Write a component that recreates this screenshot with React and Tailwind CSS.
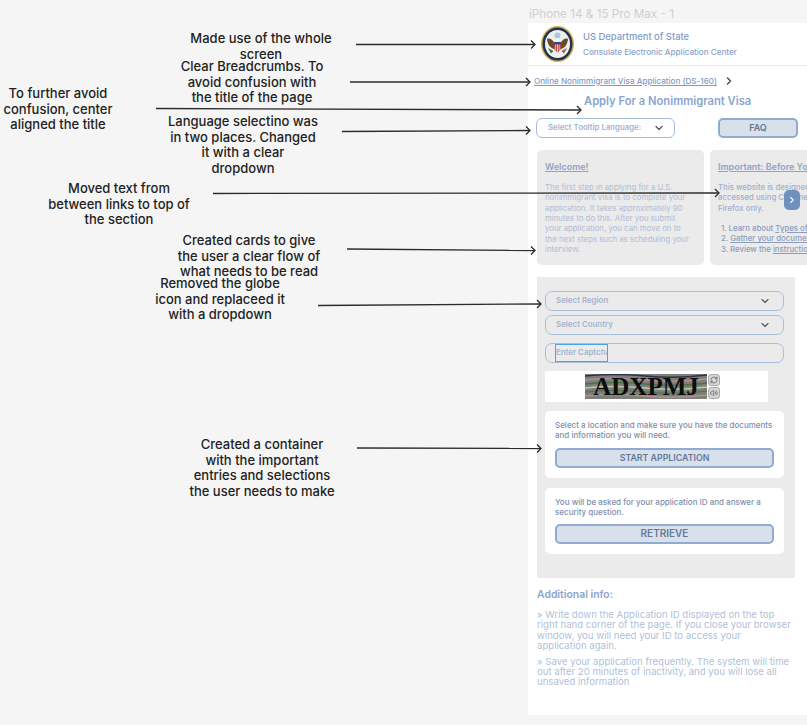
import React from 'react';
import { ChevronDown, ChevronRight, RefreshCw, Volume2 } from 'lucide-react';

const Note = ({ className, lines }) => (
  <div className={`absolute -translate-x-1/2 text-center whitespace-nowrap text-[13px] leading-[15.6px] font-medium text-[#222] ${className}`}>
    {lines.map((line) => (
      <div key={line}>{line}</div>
    ))}
  </div>
);

const arrows = [
  [356, 44.5, 535, 44.5],
  [350, 82, 530, 82],
  [156, 108.5, 581, 110],
  [342, 131.5, 530, 130.5],
  [213, 193.5, 719, 193],
  [347, 249, 535, 250.5],
  [318, 305.5, 541, 304],
  [357, 448, 541, 448.5],
];

const Arrows = () => (
  <svg className="absolute left-0 top-0 z-10" width="807" height="725" fill="none" stroke="#2b2b2b">
    {arrows.map(([x1, y1, x2, y2]) => (
      <g key={`${x1}-${y1}`}>
        <line x1={x1} y1={y1} x2={x2} y2={y2} strokeWidth="1.3" />
        <path d={`M${x2 - 4} ${y2 - 4} L${x2} ${y2} L${x2 - 4} ${y2 + 4}`} strokeWidth="1.3" />
      </g>
    ))}
  </svg>
);

const Seal = () => (
  <svg width="33" height="36" viewBox="0 0 33 36" className="shrink-0">
    <ellipse cx="16.5" cy="18" rx="16.5" ry="18" fill="#d2b04c" />
    <ellipse cx="16.5" cy="18" rx="15" ry="16.5" fill="#1f3157" />
    <ellipse cx="16.5" cy="18" rx="12.5" ry="14" fill="#eef0ec" />
    <circle cx="16.5" cy="9.5" r="3" fill="#a9c8e2" />
    <path d="M6 13 C8.5 11.5 11.5 13.5 13.5 17 L13.5 23 C9.5 22.5 6.5 18.5 6 13Z" fill="#6b4a2b" />
    <path d="M27 13 C24.5 11.5 21.5 13.5 19.5 17 L19.5 23 C23.5 22.5 26.5 18.5 27 13Z" fill="#6b4a2b" />
    <circle cx="16.5" cy="13.8" r="1.9" fill="#f4f1e6" />
    <path d="M13.2 16 H19.8 V22 C19.8 24.3 18 25.4 16.5 26.4 C15 25.4 13.2 24.3 13.2 22Z" fill="#b5343a" />
    <rect x="13.2" y="16" width="6.6" height="2.4" fill="#2b4a86" />
    <path d="M14.8 18.4 V25 M16.5 18.4 V26 M18.2 18.4 V25" stroke="#f4f1e6" strokeWidth="0.7" />
    <path d="M7 22 L12.5 25 L10 27.5Z" fill="#3d7a3a" />
    <path d="M26 22 L20.5 25 L23 27.5Z" fill="#8a6a3a" />
  </svg>
);

const Captcha = () => (
  <div className="relative w-[122px] h-[25px] overflow-hidden bg-[#7d8076] flex items-center justify-center">
    <svg className="absolute inset-0" width="122" height="25" fill="none" strokeWidth="1.4">
      <path d="M0 2 Q30 -1 60 2 T122 1" stroke="#2f2f4f" />
      <path d="M0 6 Q30 3 60 6 T122 5" stroke="#b88a92" />
      <path d="M0 10 Q30 7 60 10 T122 9" stroke="#4b6f50" />
      <path d="M0 14 Q30 11 60 14 T122 13" stroke="#c4c4ae" />
      <path d="M0 18 Q30 15 60 18 T122 17" stroke="#4f7a55" />
      <path d="M0 22 Q30 19 60 22 T122 21" stroke="#b58a9a" />
    </svg>
    <span className="relative font-['Liberation_Serif',serif] font-bold text-[25px] leading-none text-[#0d0d0d]">ADXPMJ</span>
  </div>
);

const SelectBox = ({ label }) => (
  <div className="h-5 rounded-[7px] border border-[#a9bfdc] flex items-center justify-between pl-[10px] pr-[12px]">
    <span className="text-[7.9px] font-semibold text-[#a3b4d0]">{label}</span>
    <ChevronDown size={12} strokeWidth={2.2} className="text-[#4b5563]" />
  </div>
);

const ActionCard = ({ children, label, className, buttonClass }) => (
  <div className={`rounded-[5px] bg-white px-[10px] pt-[9px] ${className}`}>
    {children}
    <div className={`h-5 rounded-[5px] border-2 border-[#8fabd2] bg-[#d8e0ea] flex items-center justify-center font-semibold text-[#66789a] ${buttonClass}`}>
      {label}
    </div>
  </div>
);

const Phone = () => (
  <div className="absolute left-[528px] top-[23px] w-[279px] h-[692px] bg-white overflow-hidden">
    <div className="h-[43px] border-b border-[#e4e8ee] flex items-center gap-[9px] pl-[13px]">
      <Seal />
      <div>
        <div className="text-[9.4px] leading-[12px] font-medium text-[#7f9bc6]">US Department of State</div>
        <div className="mt-[4px] text-[8.1px] leading-[10px] font-medium text-[#8aa3cb]">Consulate Electronic Application Center</div>
      </div>
    </div>

    <div className="mt-[9px] pl-[6px] h-3 flex items-center gap-[6px]">
      <span className="text-[8.1px] font-medium underline text-[#7f9bc6]">Online Nonimmigrant Visa Application (DS-160)</span>
      <ChevronRight size={12} strokeWidth={2.6} className="text-[#444]" />
    </div>

    <div className="mt-[7px] h-[14px] pl-[56px] text-[11.2px] leading-[14px] font-semibold text-[#8aa5cf]">Apply For a Nonimmigrant Visa</div>

    <div className="mt-[10px] flex pl-[8px]">
      <div className="w-[139px] h-5 rounded-[6px] border border-[#a3bbdc] flex items-center justify-between pl-[11px] pr-[9px]">
        <span className="text-[7.8px] font-semibold text-[#a3b4d0]">Select Tooltip Language:</span>
        <ChevronDown size={12} strokeWidth={2.4} className="text-[#4b5563]" />
      </div>
      <div className="ml-[43px] w-[80px] h-5 rounded-[5px] border-2 border-[#8fabd2] bg-[#d8e0ea] flex items-center justify-center text-[9px] font-semibold text-[#66789a]">FAQ</div>
    </div>

    <div className="relative mt-[12px] h-[115px] flex gap-[6px] pl-[9px]">
      <div className="w-[167px] shrink-0 rounded-[5px] bg-[#ebebeb] pl-[8px] pt-[11px] whitespace-nowrap">
        <div className="text-[9px] leading-[12px] font-semibold underline text-[#8ea3c9]">Welcome!</div>
        <p className="mt-[9px] text-[7.8px] leading-[10.35px] text-[#b0bdd6]">
          The first step in applying for a U.S.<br />
          nonimmigrant visa is to complete your<br />
          application. It takes approximately 90<br />
          minutes to do this. After you submit<br />
          your application, you can move on to<br />
          the next steps such as scheduling your<br />
          interview.
        </p>
      </div>
      <div className="w-[200px] shrink-0 rounded-[5px] bg-[#ebebeb] pl-[8px] pt-[11px] whitespace-nowrap">
        <div className="text-[9px] leading-[12px] font-semibold underline text-[#8ea3c9]">Important: Before You Begin</div>
        <p className="mt-[9px] text-[7.8px] leading-[10.35px] font-medium text-[#9fb0cd]">
          This website is designed to be<br />accessed using Chrome or<br />Firefox only.
        </p>
        <div className="mt-[10px] pl-[3px] text-[7.8px] leading-[10.35px] font-medium text-[#8b9dbd]">
          <div>1. Learn about <span className="underline">Types of Visas</span></div>
          <div>2. <span className="underline">Gather your documents</span></div>
          <div>3. Review the <span className="underline">instructions</span></div>
        </div>
      </div>
      <div className="absolute left-[256px] top-[40px] w-4 h-5 rounded-[5px] bg-[#6f90bd] flex items-center justify-center">
        <ChevronRight size={10} strokeWidth={2.6} className="text-white" />
      </div>
    </div>

    <div className="mt-[12px] ml-[9px] w-[258px] h-[301px] bg-[#ebebeb] pl-[8px] pr-[11px] pt-[14px]">
      <div className="flex flex-col gap-[4px]">
        <SelectBox label="Select Region" />
        <SelectBox label="Select Country" />
      </div>
      <div className="mt-2 h-5 rounded-[7px] border border-[#a9bfdc] pl-[9px] flex items-center">
        <div className="w-[53px] h-[18px] border border-[#4aa3f0] flex items-center overflow-hidden whitespace-nowrap text-[7.9px] font-semibold text-[#a3b4d0]">Enter Captcha</div>
      </div>
      <div className="mt-2 w-[223px] h-[31px] bg-white pl-[40px] flex items-center">
        <Captcha />
        <div className="ml-[1px] flex flex-col gap-[1px]">
          <div className="w-3 h-3 rounded-[3px] bg-[#d5d5d5] border border-[#aaa] flex items-center justify-center text-[#555]">
            <RefreshCw size={8} strokeWidth={2} />
          </div>
          <div className="w-3 h-3 rounded-[3px] bg-[#d5d5d5] border border-[#aaa] flex items-center justify-center text-[#555]">
            <Volume2 size={8} strokeWidth={2} />
          </div>
        </div>
      </div>
      <ActionCard className="mt-[9px] h-[67px]" buttonClass="mt-[7px] text-[8.8px]" label="START APPLICATION">
        <p className="text-[8px] leading-[10.4px] font-medium whitespace-nowrap text-[#7d8fae]">
          Select a location and make sure you have the documents<br />and information you will need.
        </p>
      </ActionCard>
      <ActionCard className="mt-[10px] h-[66px]" buttonClass="mt-[6px] text-[10px]" label="RETRIEVE">
        <p className="text-[8px] leading-[10.4px] font-medium whitespace-nowrap text-[#7d8fae]">
          You will be asked for your application ID and answer a<br />security question.
        </p>
      </ActionCard>
    </div>

    <div className="pl-[9px] whitespace-nowrap">
      <div className="mt-[11px] h-3 text-[10.4px] leading-3 font-semibold text-[#8ea5cb]">Additional info:</div>
      <p className="mt-[9px] text-[9.6px] leading-[10.4px] text-[#b0bfd9]">
        » Write down the Application ID displayed on the top<br />
        right hand corner of the page. If you close your browser<br />
        window, you will need your ID to access your<br />
        application again.
      </p>
      <p className="mt-[5px] text-[9.6px] leading-[10.4px] text-[#b0bfd9]">
        » Save your application frequently. The system will time<br />
        out after 20 minutes of inactivity, and you will lose all<br />
        unsaved information
      </p>
    </div>
  </div>
);

export default function App() {
  return (
    <div className="relative w-[807px] h-[725px] overflow-hidden bg-[#f5f5f5] font-['Inter',sans-serif]">
      <div className="absolute left-[529px] top-[7px] text-[11.7px] leading-[14px] text-[#cfcfcf]">iPhone 14 &amp; 15 Pro Max - 1</div>

      <Note className="left-[261px] top-[31px]" lines={['Made use of the whole', 'screen']} />
      <Note className="left-[252px] top-[59px]" lines={['Clear Breadcrumbs. To', 'avoid confusion with', 'the title of the page']} />
      <Note className="left-[58px] top-[86px]" lines={['To further avoid', 'confusion, center', 'aligned the title']} />
      <Note className="left-[243px] top-[114px]" lines={['Language selectino was', 'in two places. Changed', 'it with a clear', 'dropdown']} />
      <Note className="left-[119px] top-[181px]" lines={['Moved text from', 'between links to top of', 'the section']} />
      <Note className="left-[249px] top-[233px]" lines={['Created cards to give', 'the user a clear flow of', 'what needs to be read']} />
      <Note className="left-[220px] top-[276px]" lines={['Removed the globe', 'icon and replaceed it', 'with a dropdown']} />
      <Note className="left-[262px] top-[437px]" lines={['Created a container', 'with the important', 'entries and selections', 'the user needs to make']} />

      <Phone />
      <Arrows />
    </div>
  );
}
